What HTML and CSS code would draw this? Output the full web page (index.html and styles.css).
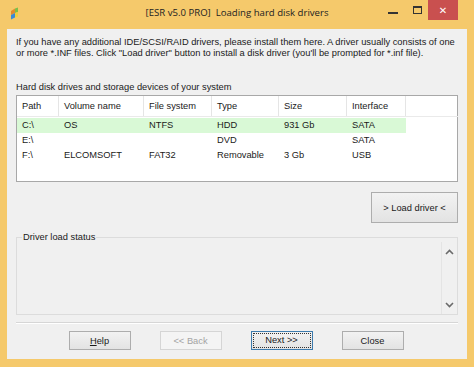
FILE: index.html
```html
<!DOCTYPE html>
<html>
<head>
  <title>[ESR v5.0 PRO] Loading hard disk drivers</title>
  <link rel="stylesheet" href="styles.css">
</head>

<body>
  <div class="window">
    <div class="titlebar">
      <div class="app-icon">
        <svg width="9" height="13" viewBox="0 0 9 13">
          <path d="M1 4 L5 1.5 L5 6 L1 8 Z" fill="#e58a2c" />
          <path d="M5 1.5 L8 0.5 L8 5 L5 6 Z" fill="#7cbf4a" />
          <path d="M1 8 L5 6 L5 10.5 L1 12.5 Z" fill="#3b8ad6" />
          <path d="M5 6 L8 5 L8 9.5 L5 10.5 Z" fill="#f1cf3c" />
        </svg>
      </div>
      <div class="title">[ESR v5.0 PRO]&nbsp; Loading hard disk drivers</div>
      <div class="controls">
        <div class="ctl ctl-min"><span></span></div>
        <div class="ctl ctl-max"><span></span></div>
        <div class="ctl ctl-close">&#x2715;</div>
      </div>
    </div>

    <div class="client">
      <p class="intro">
        If you have any additional IDE/SCSI/RAID drivers, please install them here. A driver usually consists of one<br>
        or more *.INF files. Click "Load driver" button to install a disk driver (you'll be prompted for *.inf file).
      </p>

      <div class="list-label">Hard disk drives and storage devices of your system</div>
      <div class="listview">
        <div class="lv-row lv-head">
          <div class="c-path">Path</div>
          <div class="c-vol">Volume name</div>
          <div class="c-fs">File system</div>
          <div class="c-type">Type</div>
          <div class="c-size">Size</div>
          <div class="c-if">Interface</div>
        </div>
        <div class="lv-row selected">
          <div class="c-path">C:\</div>
          <div class="c-vol">OS</div>
          <div class="c-fs">NTFS</div>
          <div class="c-type">HDD</div>
          <div class="c-size">931 Gb</div>
          <div class="c-if">SATA</div>
        </div>
        <div class="lv-row">
          <div class="c-path">E:\</div>
          <div class="c-vol"></div>
          <div class="c-fs"></div>
          <div class="c-type">DVD</div>
          <div class="c-size"></div>
          <div class="c-if">SATA</div>
        </div>
        <div class="lv-row">
          <div class="c-path">F:\</div>
          <div class="c-vol">ELCOMSOFT</div>
          <div class="c-fs">FAT32</div>
          <div class="c-type">Removable</div>
          <div class="c-size">3 Gb</div>
          <div class="c-if">USB</div>
        </div>
      </div>

      <div class="load-row">
        <button class="btn btn-load">&gt; Load driver &lt;</button>
      </div>

      <fieldset class="status-group">
        <legend>Driver load status</legend>
        <div class="status-body">
          <div class="status-text"></div>
          <div class="scrollbar">
            <svg class="arrow" width="9" height="6" viewBox="0 0 9 6"><path d="M1 5 L4.5 1.5 L8 5" fill="none" stroke="#6a6a6a" stroke-width="1.6" /></svg>
            <svg class="arrow" width="9" height="6" viewBox="0 0 9 6"><path d="M1 1 L4.5 4.5 L8 1" fill="none" stroke="#6a6a6a" stroke-width="1.6" /></svg>
          </div>
        </div>
      </fieldset>

      <div class="separator"></div>

      <div class="buttons">
        <button class="btn"><u>H</u>elp</button>
        <button class="btn disabled">&lt;&lt; Back</button>
        <button class="btn default"><span class="focus">Next &gt;&gt;</span></button>
        <button class="btn">Close</button>
      </div>
    </div>
  </div>
</body>

</html>
```

FILE: styles.css
```css
body {
  margin: 0;
  font-family: "Liberation Sans", Arial, sans-serif;
  font-size: 9.3px;
  color: #1a1a1a;
  background-color: #f5c96b;
}

.window {
  width: 474px;
  height: 367px;
  display: flex;
  flex-direction: column;
  background-color: #f5c96b;
}

/* title bar */

.titlebar {
  height: 29px;
  display: grid;
  grid-template-columns: 1fr auto 1fr;
  align-items: start;
}

.app-icon {
  padding: 7px 0 0 10px;
}

.title {
  padding-top: 6px;
  font-family: "Open Sans", sans-serif;
  font-size: 9.6px;
  color: #222;
}

.controls {
  display: flex;
  justify-content: flex-end;
  padding-right: 16px;
}

.ctl {
  height: 20px;
  display: flex;
  justify-content: center;
}

.ctl-min {
  width: 26px;
}

.ctl-min span {
  margin-top: 12px;
  width: 10px;
  height: 2px;
  background-color: #333;
}

.ctl-max {
  width: 22px;
}

.ctl-max span {
  margin-top: 6px;
  width: 7px;
  height: 5px;
  border: 1px solid #333;
  border-top-width: 2px;
}

.ctl-close {
  width: 30px;
  background-color: #c9504f;
  color: #fff;
  font-family: "DejaVu Sans", sans-serif;
  font-size: 10px;
  font-weight: bold;
  align-items: center;
}

/* client area */

.client {
  flex: 1;
  margin: 0 7px 8px 7px;
  padding: 8px 9px 9px 9px;
  background-color: #f0f0f0;
  display: flex;
  flex-direction: column;
}

.intro {
  margin: 0;
  line-height: 11px;
}

.list-label {
  margin-top: 23px;
  line-height: 11px;
}

.listview {
  margin-top: 2px;
  height: 85px;
  background-color: #fff;
  border: 1px solid #a8a8a8;
}

.lv-row {
  display: flex;
  height: 15px;
  line-height: 15px;
  width: 389px;
}

.lv-row div {
  padding-left: 5px;
  white-space: nowrap;
  box-sizing: border-box;
}

.lv-head {
  height: 20px;
  line-height: 21px;
  width: 441px;
  border-bottom: 1px solid #eaeaea;
  margin-bottom: 1px;
}

.lv-head div {
  border-right: 1px solid #e5e5e5;
}

.selected {
  background-color: #d9f9d6;
}

.c-path { width: 42px; }
.c-vol { width: 85px; }
.c-fs { width: 68px; }
.c-type { width: 67px; }
.c-size { width: 68px; }
.c-if { width: 59px; }

.load-row {
  display: flex;
  justify-content: flex-end;
  margin-top: 10px;
}

.btn {
  font-family: "Liberation Sans", Arial, sans-serif;
  font-size: 9.3px;
  color: #1a1a1a;
  width: 62px;
  height: 19px;
  padding: 0;
  border: 1px solid #adadad;
  background: linear-gradient(#f2f2f2, #e3e3e3);
}

.btn-load {
  width: 87px;
  height: 31px;
}

.status-group {
  margin: 9px 0 0 0;
  padding: 0;
  border: 1px solid #dcdcdc;
}

.status-group legend {
  margin-left: 5px;
  padding: 0 1px;
  line-height: 10px;
}

.status-body {
  height: 72px;
  display: flex;
}

.status-text {
  flex: 1;
}

.scrollbar {
  flex: 0 0 16px;
  box-sizing: border-box;
  border-left: 1px solid #e4e4e4;
  display: flex;
  flex-direction: column;
  justify-content: space-between;
  align-items: center;
  padding: 7px 0 6px 0;
}

.arrow {
  display: block;
  flex: none;
}

.separator {
  margin-top: 7px;
  border-top: 1px solid #d6d6d6;
  border-bottom: 1px solid #fff;
}

.buttons {
  display: flex;
  justify-content: center;
  gap: 29px;
  margin-top: 7px;
  padding-right: 2px;
}

.disabled {
  color: #a3a3a3;
  border-color: #d5d5d5;
  background: #f4f4f4;
}

.default {
  border-color: #3d7bad;
  padding: 1px;
}

.default .focus {
  display: block;
  height: 100%;
  box-sizing: border-box;
  border: 1px dotted #333;
  line-height: 13px;
}
```
